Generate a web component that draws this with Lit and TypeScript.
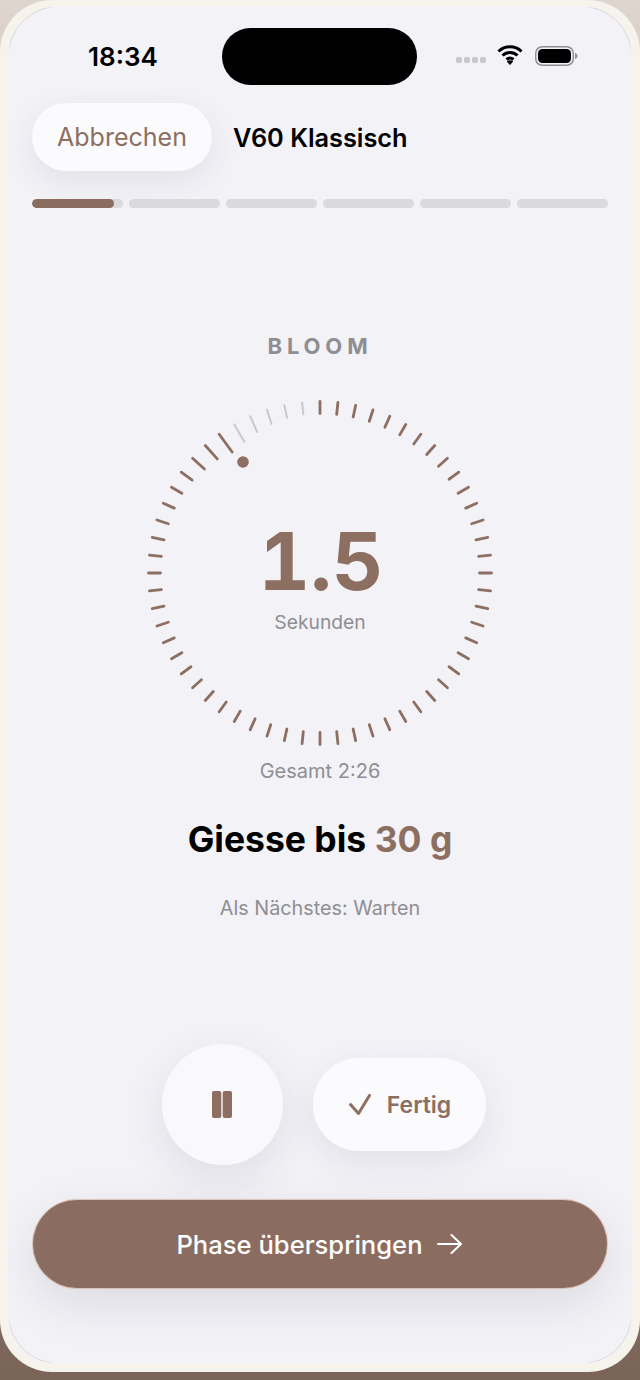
import { LitElement, html, css, svg } from "lit";
import { customElement, property } from "lit/decorators.js";

const BROWN = "#8d6f62";

// ticks get longer next to the playhead, index counted back from the top
const TICK_LEN: Record<number, number> = {
  54: 22, 53: 18, 52: 16, 51: 13.5,
  55: 20, 56: 17, 57: 14.5, 58: 12.7,
};

function dialTicks() {
  const cx = 175;
  const cy = 175;
  const outer = 171.5;
  const out = [];
  for (let i = 0; i < 60; i++) {
    const a = (i * 6 * Math.PI) / 180;
    const len = TICK_LEN[i] ?? 12;
    const sin = Math.sin(a);
    const cos = Math.cos(a);
    const gray = i >= 55;
    out.push(svg`<line
      x1=${cx + sin * (outer - len)}
      y1=${cy - cos * (outer - len)}
      x2=${cx + sin * outer}
      y2=${cy - cos * outer}
      stroke=${gray ? "#c9c8cd" : BROWN}
      stroke-width=${gray ? 2 : 2.8}
      stroke-linecap="round"
    />`);
  }
  return out;
}

@customElement("app-root")
export class AppRoot extends LitElement {
  static override styles = css`
    :host {
      display: block;
      width: 640px;
      height: 1380px;
      overflow: hidden;
      background: linear-gradient(180deg, #ddd5ce 0%, #a8958b 60%, #7a6357 100%);
      font-family: Inter, "Liberation Sans", sans-serif;
    }

    .bezel {
      box-sizing: border-box;
      height: 1372px;
      padding: 6px 8px 8px;
      background: #f6f2ec;
      border-radius: 52px;
    }

    .screen {
      position: relative;
      display: flex;
      flex-direction: column;
      height: 100%;
      border-radius: 50px;
      background: #f2f2f7;
      overflow: hidden;
    }

    /* hairline that only shows round the four corners */
    .screen::after {
      content: "";
      position: absolute;
      inset: 0;
      border: 1px solid rgba(110, 110, 125, 0.22);
      border-radius: 50px;
      pointer-events: none;
      -webkit-mask-image:
        radial-gradient(circle at 0 0, #000 38px, transparent 46px),
        radial-gradient(circle at 100% 0, #000 38px, transparent 46px),
        radial-gradient(circle at 0 100%, #000 38px, transparent 46px),
        radial-gradient(circle at 100% 100%, #000 38px, transparent 46px);
      mask-image:
        radial-gradient(circle at 0 0, #000 38px, transparent 46px),
        radial-gradient(circle at 100% 0, #000 38px, transparent 46px),
        radial-gradient(circle at 0 100%, #000 38px, transparent 46px),
        radial-gradient(circle at 100% 100%, #000 38px, transparent 46px);
    }

    .status {
      display: flex;
      align-items: center;
      height: 57px;
      margin-top: 22px;
      padding: 0 54px 0 80px;
    }

    .time {
      width: 134px;
      color: #000;
      font-size: 26px;
      font-weight: 600;
    }

    .island {
      width: 195px;
      height: 57px;
      border-radius: 29px;
      background: #000;
    }

    .status-right {
      display: flex;
      align-items: center;
      margin-left: auto;
      gap: 12px;
    }

    .dots {
      display: flex;
      gap: 2px;
      margin-top: 7px;
      margin-right: -1px;
    }

    .dots i {
      width: 6px;
      height: 6px;
      border-radius: 2px;
      background: #c7c7cc;
    }

    .wifi {
      display: block;
      margin-bottom: 4px;
    }

    .battery {
      display: block;
      margin-bottom: 1px;
    }

    .header {
      display: flex;
      align-items: center;
      gap: 21px;
      margin-top: 18px;
      padding: 0 24px;
    }

    .cancel {
      all: unset;
      box-sizing: border-box;
      width: 180px;
      height: 68px;
      border-radius: 34px;
      background: #fbfbfd;
      box-shadow: 0 10px 32px rgba(60, 60, 80, 0.09);
      color: #8d6f62;
      font-size: 25px;
      text-align: center;
      line-height: 68px;
    }

    .title {
      color: #000;
      font-size: 25.3px;
      font-weight: 600;
    }

    .steps {
      display: grid;
      grid-template-columns: repeat(6, 1fr);
      gap: 6px;
      margin-top: 28px;
      padding: 0 24px;
    }

    .step {
      height: 9px;
      border-radius: 5px;
      background: #dadade;
      overflow: hidden;
    }

    .step-fill {
      height: 100%;
      border-radius: 5px;
      background: #8b6d60;
    }

    .phase {
      margin-top: 125px;
      color: #8e8e93;
      font-size: 22px;
      font-weight: 700;
      letter-spacing: 0.22em;
      text-align: center;
      line-height: 27px;
    }

    .dial {
      position: relative;
      align-self: center;
      width: 350px;
      height: 350px;
      margin-top: 38px;
    }

    .dial svg {
      display: block;
    }

    .readout {
      display: flex;
      flex-direction: column;
      align-items: center;
      box-sizing: border-box;
      height: 100%;
      padding-top: 2px;
      justify-content: center;
    }

    .ticks {
      position: absolute;
      inset: 0;
    }

    .value {
      padding-left: 2px;
      color: #8d6f62;
      font-size: 80px;
      font-weight: 700;
      font-variant-numeric: tabular-nums;
      line-height: 92px;
    }

    .unit {
      margin-top: 4px;
      color: #8e8e93;
      font-size: 19.3px;
      line-height: 22px;
    }

    .total {
      margin-top: 12px;
      color: #8e8e93;
      font-size: 20px;
      text-align: center;
      line-height: 22px;
    }

    .instruction {
      margin-top: 36px;
      color: #000;
      font-size: 35.5px;
      font-weight: 700;
      text-align: center;
      line-height: 44px;
    }

    .instruction span {
      color: #8d6f62;
    }

    .next {
      margin-top: 35px;
      color: #8e8e93;
      font-size: 19.8px;
      text-align: center;
      line-height: 22px;
    }

    .controls {
      display: flex;
      align-items: center;
      justify-content: center;
      gap: 30px;
      margin-top: 125px;
      padding-left: 7px;
    }

    .pause {
      display: flex;
      align-items: center;
      justify-content: center;
      width: 121px;
      height: 121px;
      border-radius: 50%;
      background: #f9f9fb;
      box-shadow: 0 14px 44px rgba(60, 60, 80, 0.11);
    }

    .done {
      display: flex;
      align-items: center;
      justify-content: center;
      box-sizing: border-box;
      gap: 16px;
      width: 173px;
      height: 93px;
      padding-left: 2px;
      border-radius: 46px;
      background: #fbfbfd;
      box-shadow: 0 12px 36px rgba(60, 60, 80, 0.09);
      color: #8d6f62;
      font-size: 23px;
      font-weight: 600;
    }

    .skip {
      display: flex;
      align-items: center;
      justify-content: center;
      gap: 14px;
      margin: 35px 25px 0 25px;
      padding-right: 2px;
      height: 88px;
      border-radius: 44px;
      background: #8b6c60;
      box-shadow: 0 0 0 1px rgba(205, 165, 145, 0.55), 0 16px 48px rgba(60, 60, 80, 0.13);
      color: #fff;
      font-size: 25.6px;
      font-weight: 500;
    }
  `;

  @property() recipe = "V60 Klassisch";

  override render() {
    return html`
      <div class="bezel">
        <div class="screen">
          <div class="status">
            <span class="time">18:34</span>
            <div class="island"></div>
            <div class="status-right">
              <div class="dots"><i></i><i></i><i></i><i></i></div>
              <svg class="wifi" width="26" height="20" viewBox="0 0 26 20">
                <path d="M1.5 6.5a16.5 16.5 0 0 1 23 0M5.5 10.5a11 11 0 0 1 15 0M9.5 14.5a5.5 5.5 0 0 1 7 0" fill="none" stroke="#000" stroke-width="3"/>
                <path d="M13 20l-3.2-3.4a4.6 4.6 0 0 1 6.4 0z" fill="#000"/>
              </svg>
              <svg class="battery" width="43" height="20" viewBox="0 0 43 20">
                <rect x="0.75" y="0.75" width="37.5" height="18.5" rx="6.5" fill="none" stroke="#8e8e93" stroke-width="1.5"/>
                <rect x="3" y="3" width="33" height="14" rx="4.5" fill="#000"/>
                <path d="M40 7c1.6.5 2.5 1.6 2.5 3s-.9 2.5-2.5 3z" fill="#8e8e93"/>
              </svg>
            </div>
          </div>

          <div class="header">
            <button class="cancel">Abbrechen</button>
            <span class="title">${this.recipe}</span>
          </div>

          <div class="steps">
            <div class="step"><div class="step-fill" style="width: 90%"></div></div>
            <div class="step"></div>
            <div class="step"></div>
            <div class="step"></div>
            <div class="step"></div>
            <div class="step"></div>
          </div>

          <div class="phase">BLOOM</div>

          <div class="dial">
            <svg class="ticks" width="350" height="350" viewBox="0 0 350 350">
              ${dialTicks()}
              <circle cx="98" cy="64" r="5.8" fill="#8d6f62" />
            </svg>
            <div class="readout">
              <div class="value">1.5</div>
              <div class="unit">Sekunden</div>
            </div>
          </div>

          <div class="total">Gesamt 2:26</div>
          <div class="instruction">Giesse bis <span>30 g</span></div>
          <div class="next">Als Nächstes: Warten</div>

          <div class="controls">
            <div class="pause">
              <svg width="20" height="27" viewBox="0 0 20 27">
                <rect x="0" y="0" width="9.3" height="27" rx="2" fill="#8d6f62"/>
                <rect x="10.7" y="0" width="9.3" height="27" rx="2" fill="#8d6f62"/>
              </svg>
            </div>
            <div class="done">
              <svg width="22" height="21" viewBox="0 0 22 21">
                <path d="M1.5 10.5l8 9L20.5 1.5" fill="none" stroke="#8d6f62" stroke-width="3" stroke-linecap="round" stroke-linejoin="round"/>
              </svg>
              Fertig
            </div>
          </div>

          <div class="skip">
            Phase überspringen
            <svg width="25" height="20" viewBox="0 0 25 20">
              <path d="M1 10h23M14.5 1l9.5 9-9.5 9" fill="none" stroke="#fff" stroke-width="2" stroke-linecap="round" stroke-linejoin="round"/>
            </svg>
          </div>
        </div>
      </div>
    `;
  }
}
